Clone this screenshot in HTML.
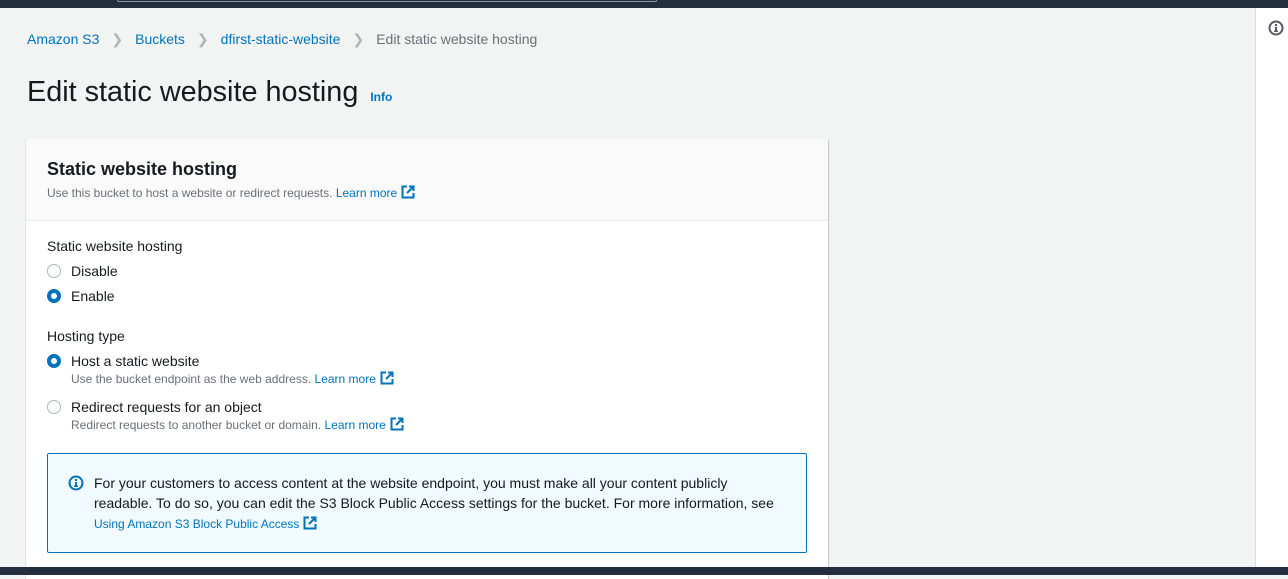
<!DOCTYPE html>
<html><head><meta charset="utf-8"><style>
*{margin:0;padding:0;box-sizing:border-box}
body{width:1288px;height:575px;overflow:hidden;background:#f2f3f3;font-family:"Liberation Sans",sans-serif;color:#16191f;position:relative}
.a{position:absolute;white-space:nowrap}
.l{color:#0073bb}
.g{color:#687078}
.ext{display:inline-block;vertical-align:-2px;margin-left:4px}
.r{position:absolute;width:14px;height:14px;border-radius:50%;border:1.5px solid #aab7b8;background:#fff}
.r.on{border:4px solid #0073bb}
</style></head><body>
<div class="a" style="left:0;top:0;width:1288px;height:8px;background:#232f3e"></div>
<div class="a" style="left:117px;top:-2px;width:540px;height:4px;border:1px solid #8d99a8;border-top:none;border-radius:0 0 2px 2px"></div>
<div class="a" style="left:1255px;top:8px;width:33px;height:559px;background:#fff;border-left:1px solid #d5dbdb"></div>
<svg class="a" style="left:1268px;top:20px" width="16" height="16" viewBox="0 0 16 16"><circle cx="8" cy="8" r="6.5" fill="none" stroke="#545b64" stroke-width="2"/><rect x="7" y="7" width="2" height="4.5" fill="#545b64"/><rect x="7" y="4" width="2" height="2" fill="#545b64"/><rect x="6" y="10.5" width="4" height="1.5" fill="#545b64"/></svg>

<div class="a" style="left:27px;top:31px;font-size:14px;line-height:16px">
<span class="l">Amazon S3</span><span style="color:#aab7b8;margin:0 12px">&#x276F;</span><span class="l">Buckets</span><span style="color:#aab7b8;margin:0 12px">&#x276F;</span><span class="l">dfirst-static-website</span><span style="color:#aab7b8;margin:0 12px">&#x276F;</span><span class="g">Edit static website hosting</span></div>
<div class="a" style="left:27px;top:75px;font-size:28.8px;line-height:34px">Edit static website hosting <span class="l" style="font-size:12px;font-weight:bold;margin-left:4px">Info</span></div>

<div class="a" style="left:26px;top:139px;width:802px;height:440px;background:#fff;box-shadow:0 1px 1px rgba(0,28,36,.3),1px 1px 1px rgba(0,28,36,.15)"></div>
<div class="a" style="left:26px;top:139px;width:802px;height:82px;background:#fafafa;border-bottom:1px solid #eaeded"></div>
<div class="a" style="left:47px;top:158px;font-size:18px;font-weight:bold;line-height:22px">Static website hosting</div>
<div class="a g" style="left:47px;top:185px;font-size:12px;line-height:16px">Use this bucket to host a website or redirect requests. <span class="l">Learn more</span><svg class="ext" width="14" height="14" viewBox="0 0 14 14"><path d="M6 1.5H1.5v11h11V8M8 1.5h4.5V6M12.5 1.5 6 8" fill="none" stroke="#0073bb" stroke-width="2"/></svg></div>

<div class="a" style="left:47px;top:238px;font-size:14px;line-height:17px">Static website hosting</div>
<div class="r" style="left:47px;top:264px"></div><div class="a" style="left:71px;top:263px;font-size:14px;line-height:17px">Disable</div>
<div class="r on" style="left:47px;top:289px"></div><div class="a" style="left:71px;top:288px;font-size:14px;line-height:17px">Enable</div>

<div class="a" style="left:47px;top:328px;font-size:14px;line-height:17px">Hosting type</div>
<div class="r on" style="left:47px;top:354px"></div><div class="a" style="left:71px;top:353px;font-size:14px;line-height:17px">Host a static website</div>
<div class="a g" style="left:71px;top:371px;font-size:12px;line-height:16px">Use the bucket endpoint as the web address. <span class="l">Learn more</span><svg class="ext" width="14" height="14" viewBox="0 0 14 14"><path d="M6 1.5H1.5v11h11V8M8 1.5h4.5V6M12.5 1.5 6 8" fill="none" stroke="#0073bb" stroke-width="2"/></svg></div>
<div class="r" style="left:47px;top:400px"></div><div class="a" style="left:71px;top:399px;font-size:14px;line-height:17px">Redirect requests for an object</div>
<div class="a g" style="left:71px;top:417px;font-size:12px;line-height:16px">Redirect requests to another bucket or domain. <span class="l">Learn more</span><svg class="ext" width="14" height="14" viewBox="0 0 14 14"><path d="M6 1.5H1.5v11h11V8M8 1.5h4.5V6M12.5 1.5 6 8" fill="none" stroke="#0073bb" stroke-width="2"/></svg></div>

<div class="a" style="left:47px;top:453px;width:760px;height:100px;background:#f1faff;border:1px solid #0073bb;border-radius:2px"></div>
<svg class="a" style="left:68px;top:475px" width="16" height="16" viewBox="0 0 16 16"><circle cx="8" cy="8" r="6.5" fill="none" stroke="#0073bb" stroke-width="2"/><rect x="7" y="7" width="2" height="4.5" fill="#0073bb"/><rect x="7" y="4" width="2" height="2" fill="#0073bb"/><rect x="6" y="10.5" width="4" height="1.5" fill="#0073bb"/></svg>
<div class="a" style="left:94px;top:473px;font-size:14px;line-height:20px">For your customers to access content at the website endpoint, you must make all your content publicly<br>readable. To do so, you can edit the S3 Block Public Access settings for the bucket. For more information, see</div>
<div class="a l" style="left:94px;top:516px;font-size:12px;line-height:16px">Using Amazon S3 Block Public Access<svg class="ext" width="14" height="14" viewBox="0 0 14 14"><path d="M6 1.5H1.5v11h11V8M8 1.5h4.5V6M12.5 1.5 6 8" fill="none" stroke="#0073bb" stroke-width="2"/></svg></div>
<div class="a" style="left:0;top:567px;width:1288px;height:8px;background:#232f3e"></div>
</body></html>
